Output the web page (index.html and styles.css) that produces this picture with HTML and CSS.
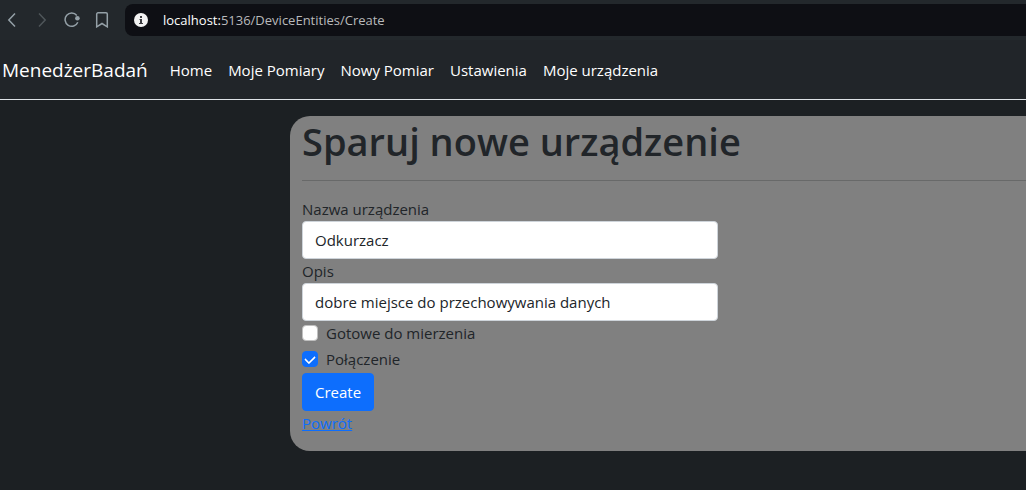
FILE: index.html
```html
<!DOCTYPE html>
<html lang="pl">
<head>
<meta charset="utf-8">
<meta name="viewport" content="width=device-width, initial-scale=1">
<title>Sparuj nowe urządzenie</title>
<link rel="stylesheet" href="styles.css">
</head>
<body>
<div class="toolbar">
  <div class="tools">
    <button class="tool" type="button" aria-label="Wstecz"><svg width="16" height="16" viewBox="0 0 16 16"><path d="M11 1.500 4.800 8l6.200 6.500"/></svg></button>
    <button class="tool tool-off" type="button" aria-label="Dalej"><svg width="16" height="16" viewBox="0 0 16 16"><path d="M5 1.500 11.200 8 5 14.500"/></svg></button>
    <button class="tool" type="button" aria-label="Odśwież"><svg width="16" height="16" viewBox="0 0 16 16"><path d="M13.800 10.200A6.600 6.600 0 1 1 12.800 3.500"/><circle class="dot" cx="13.400" cy="6.300" r="2.300"/></svg></button>
    <button class="tool" type="button" aria-label="Zakładka"><svg width="16" height="16" viewBox="0 0 16 16"><path d="M4 .8h8a1.300 1.300 0 0 1 1.300 1.300v12.700L8 11.500l-5.300 3.300V2.100A1.300 1.300 0 0 1 4 .8z"/></svg></button>
  </div>
  <div class="address">
    <svg width="14" height="14" viewBox="0 0 14 14"><circle cx="7" cy="7" r="7" fill="#f3f3f3"/><path d="M6 3h2v2H6zM5.500 6H8v4h1v1H5v-1h1V7h-.5z" fill="#3b3b3f"/></svg>
    <span class="url"><span class="host">localhost:</span>5136/DeviceEntities/Create</span>
  </div>
</div>
<header class="navbar">
  <a class="brand" href="#">MenedżerBadań</a>
  <nav class="links">
    <a href="#">Home</a>
    <a href="#">Moje Pomiary</a>
    <a href="#">Nowy Pomiar</a>
    <a href="#">Ustawienia</a>
    <a href="#">Moje urządzenia</a>
  </nav>
</header>
<main class="panel">
  <h1>Sparuj nowe urządzenie</h1>
  <hr>
  <form class="form">
    <label for="name">Nazwa urządzenia</label>
    <input class="field" id="name" type="text" value="Odkurzacz">
    <label for="desc">Opis</label>
    <input class="field" id="desc" type="text" value="dobre miejsce do przechowywania danych">
    <label class="check"><input type="checkbox"> Gotowe do mierzenia</label>
    <label class="check"><input type="checkbox" checked> Połączenie</label>
    <button class="submit" type="button">Create</button>
  </form>
  <a class="back" href="#">Powrót</a>
</main>
</body>
</html>
```
FILE: styles.css
```css
* {
  box-sizing: border-box;
}

body {
  margin: 0;
  min-height: 100vh;
  background: #1c2023;
  color: #212529;
  font: 15px/24px "Open Sans", "Noto Sans", sans-serif;
  overflow-x: hidden;
}

.toolbar {
  display: flex;
  align-items: center;
  height: 40px;
  gap: 15px;
  background: #23282c;
}

.tools {
  display: flex;
  gap: 14px;
  padding-left: 4px;
}

.tool {
  width: 16px;
  height: 16px;
  padding: 0;
  border: 0;
  background: none;
}

.tool svg {
  display: block;
  fill: none;
  stroke: #94a0a7;
  stroke-width: 1.5;
}

.tool-off svg {
  stroke: #4f565a;
}

.tool .dot {
  fill: #94a0a7;
  stroke: none;
}

.address {
  flex: 1;
  display: flex;
  align-items: center;
  gap: 15px;
  height: 32px;
  padding-left: 9px;
  border-radius: 8px 0 0 8px;
  background: #0e0f14;
  color: #b9babc;
  font-size: 13px;
}

.host {
  color: #fff;
}

.navbar {
  display: flex;
  align-items: center;
  gap: 22px;
  height: 60px;
  padding: 0 2px;
  background: #212529;
  border-bottom: 1px solid #dee2e6;
}

.navbar a {
  color: #fff;
  text-decoration: none;
}

.navbar .brand {
  font-size: 19px;
}

.links {
  display: flex;
  gap: 16px;
}

.panel {
  margin: 16px 0 0 290px;
  padding: 0 0 16px 12px;
  border-radius: 20px 0 0 20px;
  background: #808080;
}

h1 {
  margin: 0;
  padding-top: 2px;
  font-size: 38px;
  line-height: 46px;
  font-weight: 600;
}

hr {
  margin: 16px 0;
  border: 0;
  border-top: 1px solid #686969;
}

.form {
  display: flex;
  flex-direction: column;
  max-width: 416px;
}

.field {
  width: 100%;
  height: 38px;
  padding: 6px 12px;
  border: 1px solid #ced4da;
  border-radius: 4px;
  background: #fff;
  color: #212529;
  font: inherit;
}

.check {
  display: flex;
  gap: 8px;
  height: 24px;
  margin-bottom: 2px;
}

.check input {
  appearance: none;
  width: 16px;
  height: 16px;
  margin: 4px 0 0;
  border: 1px solid #bfbfbf;
  border-radius: 4px;
  background: #fff;
}

.check input:checked {
  display: grid;
  place-items: center;
  border-color: #0d6efd;
  background: #0d6efd;
}

.check input:checked::before {
  content: "";
  width: 8px;
  height: 5px;
  margin-bottom: 2px;
  border: solid #fff;
  border-width: 0 0 2px 2px;
  border-radius: 1px;
  transform: rotate(-45deg);
}

.submit {
  align-self: flex-start;
  height: 38px;
  padding: 6px 12px;
  border: 1px solid #0d6efd;
  border-radius: 4px;
  background: #0d6efd;
  color: #fff;
  font: inherit;
}

.back {
  display: block;
  width: fit-content;
  color: #0d6efd;
}
```
